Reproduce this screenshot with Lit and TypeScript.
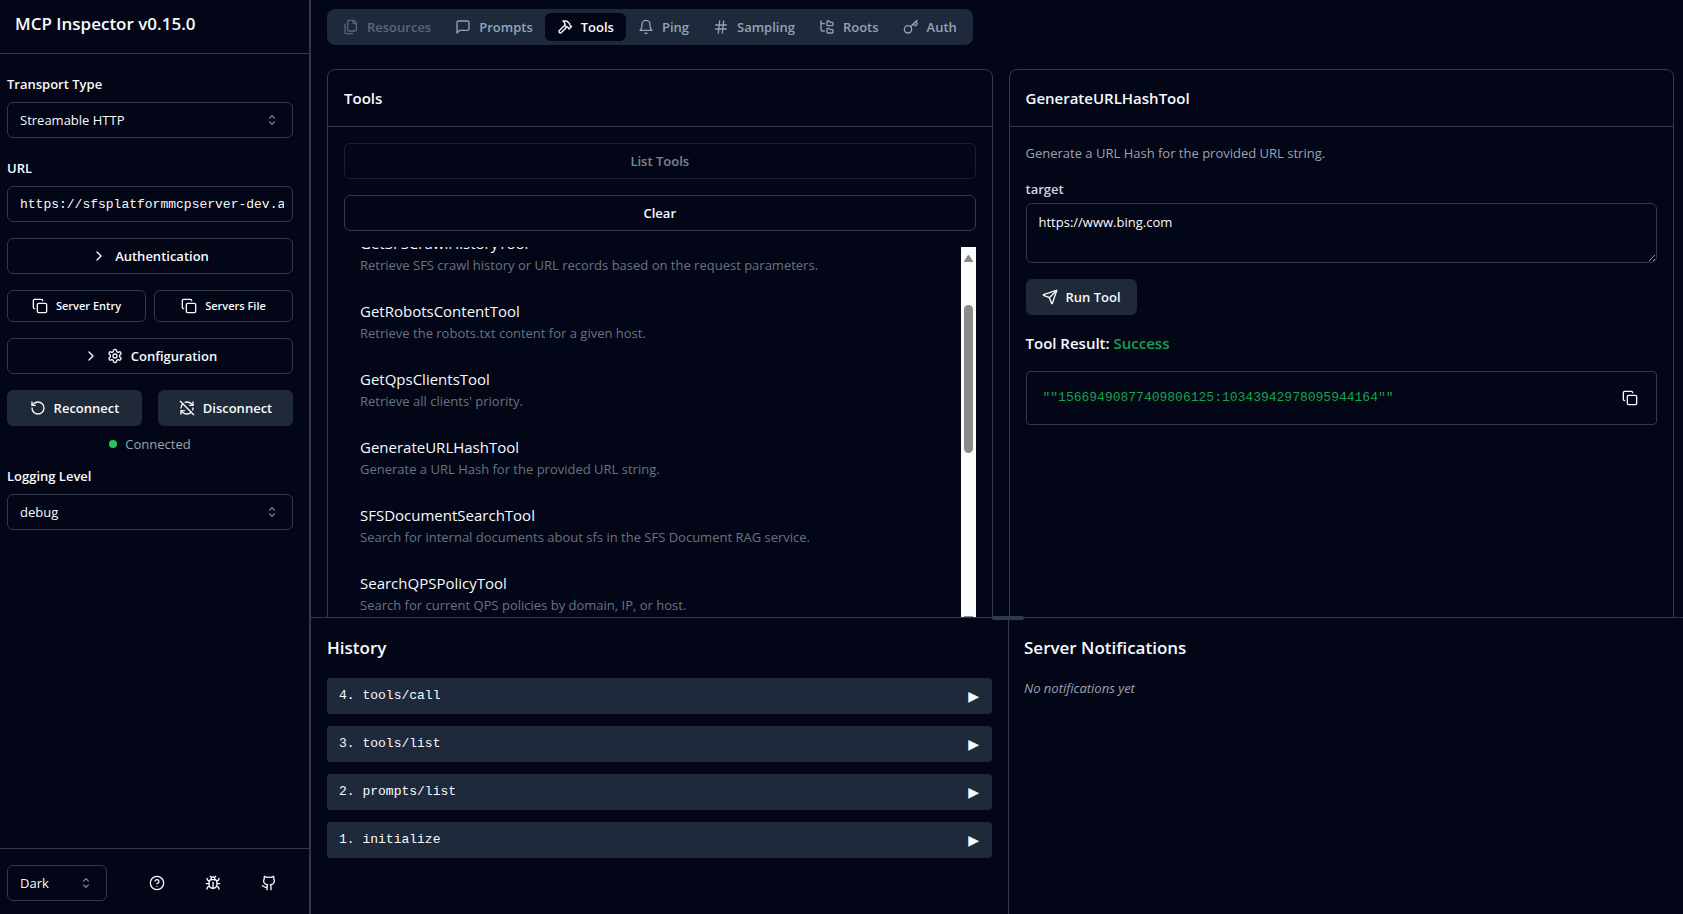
import { LitElement, html, css, svg, nothing } from "lit";
import { customElement, property, query } from "lit/decorators.js";

const p = (...ds: string[]) => ds.map((d) => svg`<path d=${d}></path>`);

const ICONS: Record<string, unknown> = {
  files: p(
    "M20 7h-3a2 2 0 0 1-2-2V2",
    "M9 18a2 2 0 0 1-2-2V4a2 2 0 0 1 2-2h7l4 4v10a2 2 0 0 1-2 2Z",
    "M3 7.6v12.8A1.6 1.6 0 0 0 4.6 22h9.8"
  ),
  message: p("M21 15a2 2 0 0 1-2 2H7l-4 4V5a2 2 0 0 1 2-2h14a2 2 0 0 1 2 2z"),
  hammer: p(
    "m15 12-8.373 8.373a1 1 0 1 1-3-3L12 9",
    "m18 15 4-4",
    "m21.5 11.5-1.914-1.914A2 2 0 0 1 19 8.172V7l-2.26-2.26a6 6 0 0 0-4.202-1.756L9 2.96l.92.82A6.18 6.18 0 0 1 12 8.4V10l2 2h1.172a2 2 0 0 1 1.414.586L18.5 14.5"
  ),
  bell: p("M6 8a6 6 0 0 1 12 0c0 7 3 9 3 9H3s3-2 3-9", "M10.3 21a1.94 1.94 0 0 0 3.4 0"),
  hash: p("M4 9h16", "M4 15h16", "M10 3 8 21", "M16 3l-2 18"),
  tree: p(
    "M20 10a1 1 0 0 0 1-1V6a1 1 0 0 0-1-1h-2.5a1 1 0 0 1-.8-.4l-.9-1.2A1 1 0 0 0 15 3h-2a1 1 0 0 0-1 1v5a1 1 0 0 0 1 1Z",
    "M20 21a1 1 0 0 0 1-1v-3a1 1 0 0 0-1-1h-2.9a1 1 0 0 1-.88-.55l-.42-.85a1 1 0 0 0-.92-.6H13a1 1 0 0 0-1 1v5a1 1 0 0 0 1 1Z",
    "M3 5a2 2 0 0 0 2 2h3",
    "M3 3v13a2 2 0 0 0 2 2h3"
  ),
  key: [
    ...p(
      "m15.5 7.5 2.3 2.3a1 1 0 0 0 1.4 0l2.1-2.1a1 1 0 0 0 0-1.4L19 4",
      "m21 2-9.6 9.6"
    ),
    svg`<circle cx="7.5" cy="15.5" r="5.5"></circle>`,
  ],
  copy: [
    svg`<rect x="8" y="8" width="14" height="14" rx="2"></rect>`,
    ...p("M4 16c-1.1 0-2-.9-2-2V4c0-1.1.9-2 2-2h10c1.1 0 2 .9 2 2"),
  ],
  settings: [
    ...p(
      "M12.22 2h-.44a2 2 0 0 0-2 2v.18a2 2 0 0 1-1 1.73l-.43.25a2 2 0 0 1-2 0l-.15-.08a2 2 0 0 0-2.73.73l-.22.38a2 2 0 0 0 .73 2.73l.15.1a2 2 0 0 1 1 1.72v.51a2 2 0 0 1-1 1.74l-.15.09a2 2 0 0 0-.73 2.73l.22.38a2 2 0 0 0 2.73.73l.15-.08a2 2 0 0 1 2 0l.43.25a2 2 0 0 1 1 1.73V20a2 2 0 0 0 2 2h.44a2 2 0 0 0 2-2v-.18a2 2 0 0 1 1-1.73l.43-.25a2 2 0 0 1 2 0l.15.08a2 2 0 0 0 2.73-.73l.22-.39a2 2 0 0 0-.73-2.73l-.15-.08a2 2 0 0 1-1-1.74v-.5a2 2 0 0 1 1-1.74l.15-.09a2 2 0 0 0 .73-2.73l-.22-.38a2 2 0 0 0-2.73-.73l-.15.08a2 2 0 0 1-2 0l-.43-.25a2 2 0 0 1-1-1.73V4a2 2 0 0 0-2-2z"
    ),
    svg`<circle cx="12" cy="12" r="3"></circle>`,
  ],
  rotate: p("M3 12a9 9 0 1 0 9-9 9.75 9.75 0 0 0-6.74 2.74L3 8", "M3 3v5h5"),
  refreshOff: p(
    "M21 8L18.74 5.74A9.75 9.75 0 0 0 12 3C11 3 10.03 3.16 9.13 3.47",
    "M8 16H3v5",
    "M3 12C3 9.51 4 7.26 5.64 5.64",
    "m3 16 2.26 2.26A9.75 9.75 0 0 0 12 21c2.49 0 4.74-1 6.36-2.64",
    "M21 12c0 1-.16 1.97-.47 2.87",
    "M21 3v5h-5",
    "M22 22 2 2"
  ),
  help: [
    svg`<circle cx="12" cy="12" r="10"></circle>`,
    ...p("M9.09 9a3 3 0 0 1 5.83 1c0 2-3 3-3 3", "M12 17h.01"),
  ],
  bug: p(
    "m8 2 1.88 1.88",
    "M14.12 3.88 16 2",
    "M9 7.13v-1a3.003 3.003 0 1 1 6 0v1",
    "M12 20c-3.3 0-6-2.7-6-6v-3a4 4 0 0 1 4-4h4a4 4 0 0 1 4 4v3c0 3.3-2.7 6-6 6",
    "M12 20v-9",
    "M6.53 9C4.6 8.8 3 7.1 3 5",
    "M6 13H2",
    "M3 21c0-2.1 1.7-3.9 3.8-4",
    "M20.97 5c0 2.1-1.6 3.8-3.5 4",
    "M22 13h-4",
    "M17.2 17c2.1.1 3.8 1.9 3.8 4"
  ),
  github: p(
    "M15 22v-4a4.8 4.8 0 0 0-1-3.5c3 0 6-2 6-5.5.08-1.25-.27-2.48-1-3.5.28-1.15.28-2.35 0-3.5 0 0-1 0-3 1.5-2.64-.5-5.36-.5-8 0C6 2 5 2 5 2c-.3 1.15-.3 2.35 0 3.5A5.403 5.403 0 0 0 4 9c0 3.5 3 5.5 6 5.5-.39.49-.68 1.05-.85 1.65-.17.6-.22 1.23-.15 1.85v4",
    "M9 18c-4.51 2-5-2-7-2"
  ),
  send: p(
    "M14.536 21.686a.5.5 0 0 0 .937-.024l6.5-19a.496.496 0 0 0-.635-.635l-19 6.5a.5.5 0 0 0-.024.937l7.93 3.18a2 2 0 0 1 1.112 1.11z",
    "m21.854 2.147-10.94 10.939"
  ),
  chevron: p("m9 18 6-6-6-6"),
  sort: p("M8.4 9.2 12 5.6l3.6 3.6", "M8.4 14.8 12 18.4l3.6-3.6"),
};

@customElement("ui-icon")
class UiIcon extends LitElement {
  static styles = css`
    :host {
      display: block;
      flex: none;
      width: 16px;
      height: 16px;
    }
    .icon {
      display: block;
      width: 100%;
      height: 100%;
      fill: none;
      stroke: currentColor;
      stroke-width: 2;
      stroke-linecap: round;
      stroke-linejoin: round;
    }
  `;
  @property() name = "";
  render() {
    return html`<svg class="icon" viewBox="0 0 24 24" aria-hidden="true">${ICONS[this.name]}</svg>`;
  }
}

const TABS = [
  { label: "Resources", icon: "files", disabled: true },
  { label: "Prompts", icon: "message" },
  { label: "Tools", icon: "hammer", active: true },
  { label: "Ping", icon: "bell" },
  { label: "Sampling", icon: "hash" },
  { label: "Roots", icon: "tree" },
  { label: "Auth", icon: "key" },
];

const TOOLS = [
  ["GetSFSCrawlHistoryTool", "Retrieve SFS crawl history or URL records based on the request parameters."],
  ["GetRobotsContentTool", "Retrieve the robots.txt content for a given host."],
  ["GetQpsClientsTool", "Retrieve all clients' priority."],
  ["GenerateURLHashTool", "Generate a URL Hash for the provided URL string."],
  ["SFSDocumentSearchTool", "Search for internal documents about sfs in the SFS Document RAG service."],
  ["SearchQPSPolicyTool", "Search for current QPS policies by domain, IP, or host."],
];

const HISTORY = ["initialize", "prompts/list", "tools/list", "tools/call"];

@customElement("app-root")
class AppRoot extends LitElement {
  static styles = css`
    :host {
      --bg: #020617;
      --fg: #f8fafc;
      --line: #303a49;
      --fill: #1e293b;
      --button: #1f2937;
      --muted: #94a3b8;
      --faint: #6b7280;
      --green: #16a34a;
      --mono: "Liberation Mono", monospace;
      display: flex;
      height: 100vh;
      overflow: hidden;
      background: var(--bg);
      color: var(--fg);
      font: 400 13px/20px "Open Sans", "Noto Sans", sans-serif;
    }
    *,
    *::before {
      box-sizing: border-box;
    }
    h1,
    h2,
    h3,
    h4,
    p,
    ul,
    ol {
      margin: 0;
      padding: 0;
      list-style: none;
    }
    button,
    input,
    select,
    textarea {
      margin: 0;
      font: inherit;
      color: inherit;
      background: transparent;
      border: 1px solid var(--line);
      border-radius: 6px;
      outline: none;
    }
    button {
      display: flex;
      align-items: center;
      justify-content: center;
      gap: 8px;
      height: 36px;
      padding: 0 16px;
      font-weight: 600;
      white-space: nowrap;
    }

    .sidebar {
      flex: none;
      display: flex;
      flex-direction: column;
      width: 311px;
      border-right: 2px solid var(--line);
    }
    .brand {
      padding: 10px 15px 15px;
      border-bottom: 1px solid var(--line);
    }
    .brand h1 {
      font-size: 17px;
      line-height: 28px;
      font-weight: 600;
    }
    .settings {
      flex: 1;
      display: flex;
      flex-direction: column;
      gap: 16px;
      min-height: 0;
      padding: 16px 16px 16px 7px;
      overflow: hidden;
    }
    .field {
      display: grid;
      gap: 6px;
    }
    .field label {
      padding-top: 2px;
      line-height: 24px;
      font-weight: 600;
    }
    .url {
      width: 100%;
      height: 36px;
      padding: 0 8px 0 12px;
      font-family: var(--mono);
    }
    .select {
      display: grid;
      align-items: center;
    }
    .select select {
      grid-area: 1 / 1;
      width: 100%;
      height: 36px;
      padding: 0 12px;
      appearance: none;
    }
    .select ui-icon {
      grid-area: 1 / 1;
      justify-self: end;
      margin-right: 13px;
      opacity: 0.5;
      pointer-events: none;
    }
    .pair {
      display: grid;
      grid-template-columns: 1fr 1fr;
      gap: 8px;
    }
    .pair.wide {
      gap: 16px;
    }
    .pair .small {
      height: 32px;
      padding: 0 8px;
      font-size: 11px;
    }
    .solid {
      border: 0;
      background: var(--button);
    }
    .connection {
      display: grid;
      gap: 8px;
    }
    .status {
      display: flex;
      align-items: center;
      justify-content: center;
      gap: 8px;
      color: #9ca3af;
    }
    .status::before {
      content: "";
      width: 8px;
      height: 8px;
      border-radius: 50%;
      background: #22c55e;
    }
    .logging {
      margin-top: -8px;
    }
    .footer {
      display: flex;
      align-items: center;
      justify-content: space-between;
      padding: 16px 22px 13px 7px;
      border-top: 1px solid var(--line);
    }
    .footer .select {
      width: 100px;
    }
    .links {
      display: flex;
      gap: 20px;
    }
    .links a {
      display: grid;
      place-items: center;
      width: 36px;
      height: 36px;
      color: inherit;
    }

    .main {
      flex: 1;
      display: flex;
      flex-direction: column;
      min-width: 0;
    }
    .workspace {
      flex: 1;
      min-height: 0;
      padding: 9px 9px 0 16px;
      overflow: hidden;
    }
    .tabs {
      display: inline-flex;
      padding: 4px;
      border-radius: 8px;
      background: var(--fill);
      color: var(--muted);
    }
    .tabs button {
      height: 28px;
      padding: 0 12px;
      border: 0;
    }
    .tabs button:disabled {
      opacity: 0.5;
    }
    .tabs .active {
      background: var(--bg);
      color: var(--fg);
    }
    .cards {
      display: grid;
      grid-template-columns: 1fr 1fr;
      gap: 16px;
      margin-top: 24px;
    }
    .card {
      min-width: 0;
      min-height: 600px;
      border: 1px solid var(--line);
      border-radius: 8px;
    }
    .card h3 {
      padding: 16px;
      font-size: 15px;
      line-height: 24px;
      font-weight: 600;
      border-bottom: 1px solid var(--line);
    }
    .body {
      display: flex;
      flex-direction: column;
      gap: 16px;
      padding: 16px;
    }
    .body button:disabled {
      opacity: 0.5;
    }
    .scroller {
      display: flex;
      height: 384px;
    }
    .list {
      flex: 1;
      min-width: 0;
      overflow: hidden;
    }
    .list li {
      padding: 8px 16px;
      margin-bottom: 8px;
    }
    .list .name {
      display: block;
      font-size: 15px;
      line-height: 24px;
    }
    .list .about {
      display: block;
      color: var(--faint);
    }
    .track {
      flex: none;
      display: flex;
      flex-direction: column;
      align-items: center;
      width: 15px;
      padding: 8px 0;
      background: #fcfcfc;
    }
    .track svg {
      display: block;
      flex: none;
      width: 9px;
      height: 7px;
      fill: #8b8b8b;
    }
    .thumb {
      width: 9px;
      height: 148px;
      margin: 43px 0 auto;
      border-radius: 5px;
      background: #8b8b8b;
    }
    .muted {
      color: #9ca3af;
    }
    .param {
      display: grid;
      gap: 4px;
    }
    .param label {
      font-weight: 600;
      color: #d1d5db;
    }
    .param textarea {
      display: block;
      width: 100%;
      height: 60px;
      padding: 8px 12px;
      resize: vertical;
    }
    .run {
      align-self: start;
    }
    .result-title {
      font-size: 15px;
      line-height: 24px;
      font-weight: 600;
    }
    .ok {
      color: var(--green);
    }
    .result {
      display: flex;
      align-items: center;
      justify-content: space-between;
      height: 54px;
      padding: 0 18px 0 16px;
      border: 1px solid var(--line);
      border-radius: 4px;
      font-family: var(--mono);
    }
    .result button {
      width: 16px;
      height: 16px;
      padding: 0;
      border: 0;
    }

    .bottom {
      position: relative;
      flex: none;
      display: grid;
      grid-template-columns: 697fr 675fr;
      height: 297px;
      border-top: 1px solid var(--line);
    }
    .grip {
      position: absolute;
      top: -2px;
      left: 50%;
      width: 32px;
      height: 4px;
      margin-left: -5px;
      border-radius: 2px;
      background: var(--line);
    }
    .pane {
      padding: 16px;
    }
    .pane + .pane {
      border-left: 1px solid var(--line);
      padding-left: 15px;
    }
    .pane h2 {
      margin-bottom: 16px;
      font-size: 17px;
      line-height: 28px;
      font-weight: 600;
    }
    .history {
      display: grid;
      gap: 12px;
    }
    .history button {
      justify-content: space-between;
      width: 100%;
      padding: 0 13px 0 12px;
      border: 0;
      border-radius: 4px;
      background: var(--fill);
      font-weight: 400;
      font-family: var(--mono);
    }
    .play {
      font-family: "DejaVu Sans", sans-serif;
      font-size: 14px;
    }
    .empty {
      font-style: italic;
      color: #9ca3af;
    }
  `;

  @query(".list") list!: HTMLElement;

  firstUpdated() {
    this.list.scrollTop = 24;
  }

  private select(id: string, value: string, label: string | null = null) {
    return html`<div class="select">
      <select id=${id} aria-label=${label ?? nothing}>
        <option>${value}</option>
      </select>
      <ui-icon name="sort"></ui-icon>
    </div>`;
  }

  render() {
    return html`
      <aside class="sidebar">
        <header class="brand"><h1>MCP Inspector v0.15.0</h1></header>
        <div class="settings">
          <div class="field">
            <label for="transport">Transport Type</label>
            ${this.select("transport", "Streamable HTTP")}
          </div>
          <div class="field">
            <label for="url">URL</label>
            <input id="url" class="url" type="text" value="https://sfsplatformmcpserver-dev.azurewebsites.net" />
          </div>
          <button><ui-icon name="chevron"></ui-icon>Authentication</button>
          <div class="pair">
            <button class="small"><ui-icon name="copy"></ui-icon>Server Entry</button>
            <button class="small"><ui-icon name="copy"></ui-icon>Servers File</button>
          </div>
          <button>
            <ui-icon name="chevron"></ui-icon><ui-icon name="settings"></ui-icon>Configuration
          </button>
          <div class="connection">
            <div class="pair wide">
              <button class="solid"><ui-icon name="rotate"></ui-icon>Reconnect</button>
              <button class="solid"><ui-icon name="refreshOff"></ui-icon>Disconnect</button>
            </div>
            <div class="status">Connected</div>
          </div>
          <div class="field logging">
            <label for="level">Logging Level</label>
            ${this.select("level", "debug")}
          </div>
        </div>
        <footer class="footer">
          ${this.select("theme", "Dark", "Theme")}
          <nav class="links">
            <a href="#docs" aria-label="Documentation"><ui-icon name="help"></ui-icon></a>
            <a href="#debug" aria-label="Debugging guide"><ui-icon name="bug"></ui-icon></a>
            <a href="#source" aria-label="Source code"><ui-icon name="github"></ui-icon></a>
          </nav>
        </footer>
      </aside>
      <main class="main">
        <section class="workspace">
          <div class="tabs" role="tablist">
            ${TABS.map(
              (t) => html`<button
                role="tab"
                class=${t.active ? "active" : ""}
                aria-selected=${t.active ? "true" : "false"}
                ?disabled=${t.disabled}
              ><ui-icon name=${t.icon}></ui-icon>${t.label}</button>`
            )}
          </div>
          <div class="cards">
            <section class="card">
              <h3>Tools</h3>
              <div class="body">
                <button disabled>List Tools</button>
                <button>Clear</button>
                <div class="scroller">
                  <ul class="list">
                    ${TOOLS.map(
                      ([name, about]) => html`<li>
                        <span class="name">${name}</span><span class="about">${about}</span>
                      </li>`
                    )}
                  </ul>
                  <div class="track" aria-hidden="true">
                    <svg viewBox="0 0 9 7"><path d="M3.6.6a1 1 0 0 1 1.8 0L9 6.2V7H0v-.8z"></path></svg>
                    <div class="thumb"></div>
                    <svg viewBox="0 0 9 7"><path d="M3.6 6.4a1 1 0 0 0 1.8 0L9 .8V0H0v.8z"></path></svg>
                  </div>
                </div>
              </div>
            </section>
            <section class="card">
              <h3>GenerateURLHashTool</h3>
              <div class="body">
                <p class="muted">Generate a URL Hash for the provided URL string.</p>
                <div class="param">
                  <label for="target">target</label>
                  <textarea id="target" .value=${"https://www.bing.com"}></textarea>
                </div>
                <button class="solid run"><ui-icon name="send"></ui-icon>Run Tool</button>
                <h4 class="result-title">Tool Result: <span class="ok">Success</span></h4>
                <div class="result">
                  <span class="ok">""15669490877409806125:10343942978095944164""</span>
                  <button aria-label="Copy result"><ui-icon name="copy"></ui-icon></button>
                </div>
              </div>
            </section>
          </div>
        </section>
        <section class="bottom">
          <div class="grip"></div>
          <div class="pane">
            <h2>History</h2>
            <ol class="history">
              ${HISTORY.map((h, i) => html`<li>
                <button><span>${i + 1}. ${h}</span><span class="play">▶</span></button>
              </li>`).reverse()}
            </ol>
          </div>
          <div class="pane">
            <h2>Server Notifications</h2>
            <p class="empty">No notifications yet</p>
          </div>
        </section>
      </main>
    `;
  }
}
